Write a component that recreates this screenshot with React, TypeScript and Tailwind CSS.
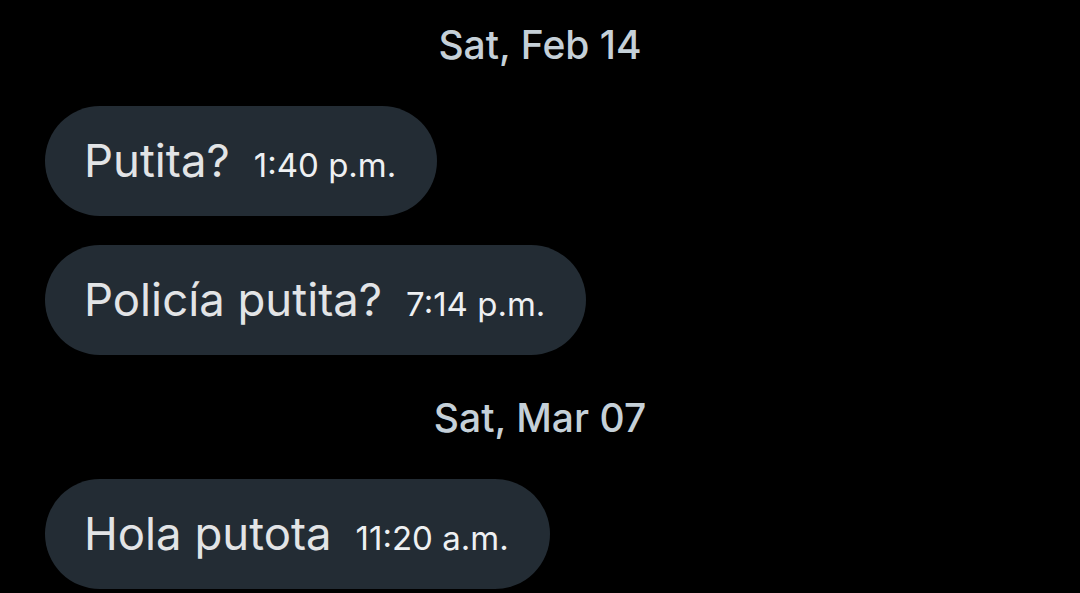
const messages = [
  { date: "Sat, Feb 14", items: [
    { text: "Putita?", time: "1:40 p.m." },
    { text: "Policía putita?", time: "7:14 p.m." },
  ] },
  { date: "Sat, Mar 07", items: [{ text: "Hola putota", time: "11:20 a.m." }] },
];

const Bubble = ({ text, time }: { text: string; time: string }) => (
  <div className="flex h-[110px] w-fit items-center rounded-[55px] bg-[#232c34] pl-[39px] pr-[41px]">
    <div className="flex items-baseline">
      <span className="text-[45.5px] leading-none text-[#e2e4e6]">{text}</span>
      <span className="ml-[24px] text-[33px] leading-none text-[#eef0f2]">{time}</span>
    </div>
  </div>
);

export default function App() {
  return (
    <div
      className="h-[593px] w-[1080px] overflow-hidden bg-black pl-[45px] pt-[25px]"
      style={{ fontFamily: "Inter, 'Liberation Sans', sans-serif" }}
    >
      {messages.map((group, gi) => (
        <div key={group.date} className={gi > 0 ? "mt-[43px]" : ""}>
          <div className="-ml-[45px] flex h-[40px] items-center justify-center text-[39px] font-medium text-[#c5d0d8]">
            {group.date}
          </div>
          <div className="mt-[41px] flex flex-col gap-[29px]">
            {group.items.map((m) => (
              <Bubble key={m.text} text={m.text} time={m.time} />
            ))}
          </div>
        </div>
      ))}
    </div>
  );
}
